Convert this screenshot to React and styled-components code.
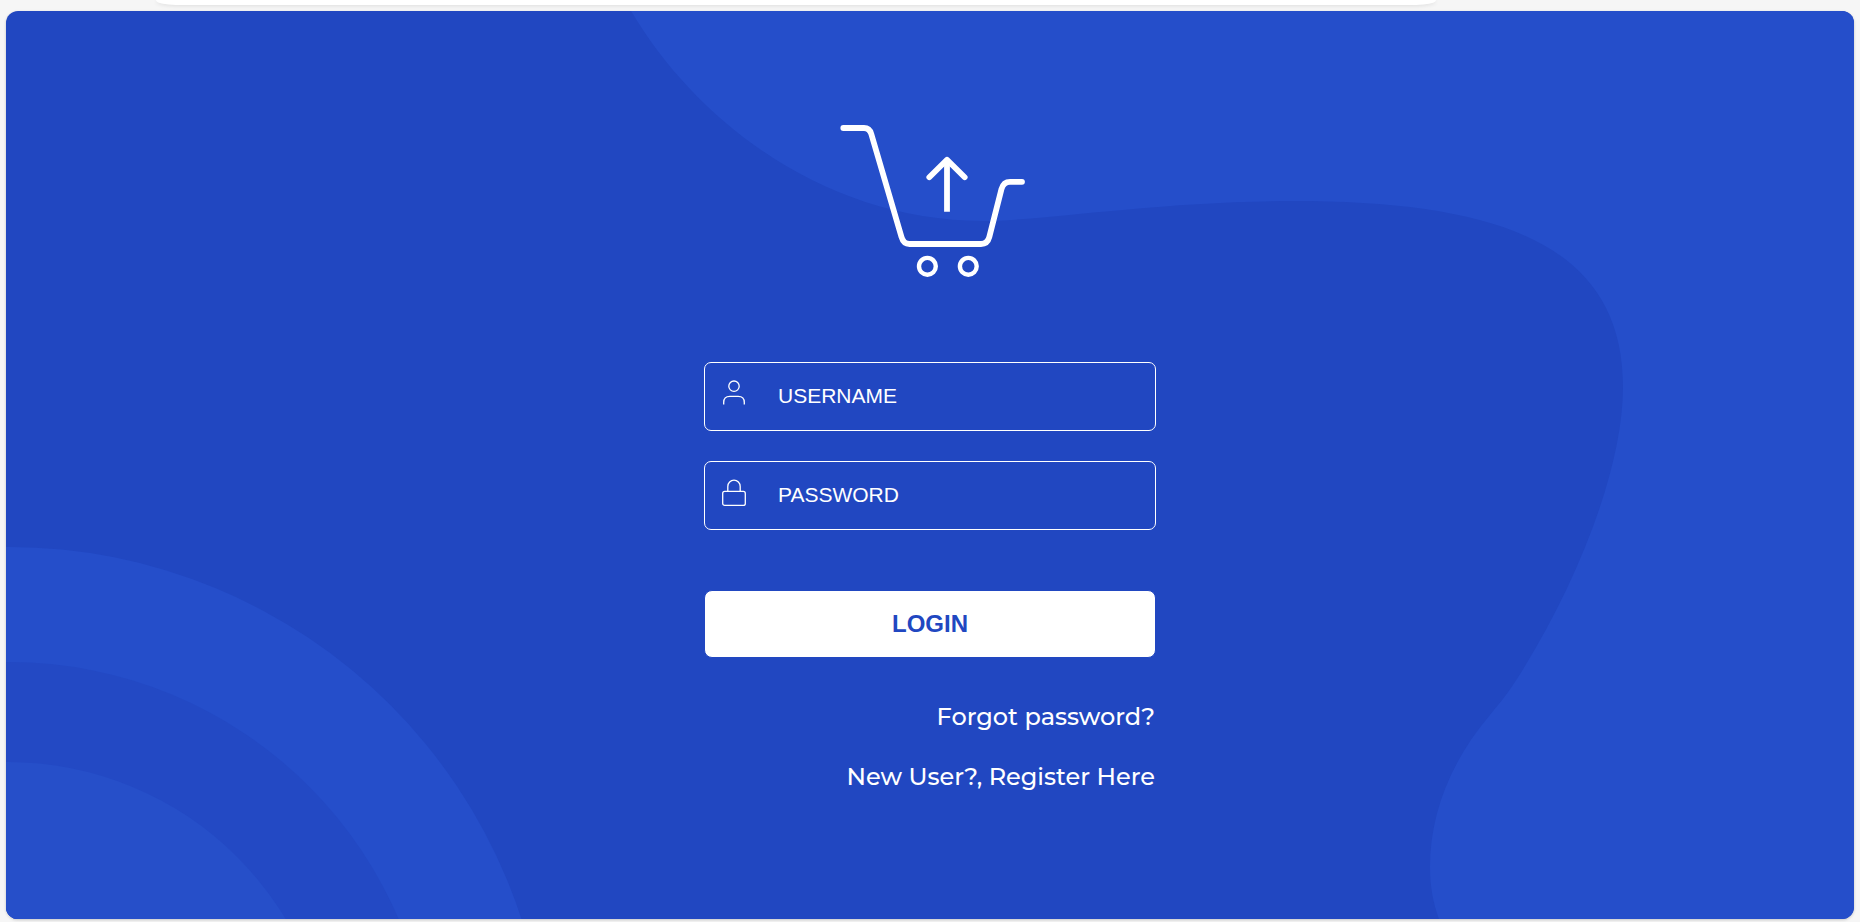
import React from "react";
import styled, { createGlobalStyle } from "styled-components";

const BLUE = "#2147c1";
const LIGHT_BLUE = "#254eca";

const GlobalStyle = createGlobalStyle`
  *, *::before, *::after { box-sizing: border-box; }
  body {
    margin: 0;
    background: #f6f6f6;
    font-family: "Liberation Sans", Arial, sans-serif;
  }
`;

const Page = styled.div`
  display: flex;
  flex-direction: column;
  min-height: 100vh;
  padding: 0 6px 3px;
`;

const TopBar = styled.header`
  width: 69.3%;
  height: 5px;
  margin: 0 0 6px 8.1%;
  background: #fff;
  border-radius: 0 0 20px 20px / 0 0 5px 5px;
  box-shadow: 0 1px 4px rgba(0, 0, 0, 0.1);
`;

const Card = styled.main`
  display: grid;
  flex: 1;
  background: ${BLUE};
  border-radius: 12px;
  box-shadow: 0 1px 3px rgba(0, 0, 0, 0.2);
  overflow: hidden;
  position: relative;
`;

const Backdrop = styled.svg`
  position: absolute;
  inset: 0;
  width: 100%;
  height: 100%;
`;

const Content = styled.div`
  position: relative;
  display: flex;
  flex-direction: column;
  align-items: center;
  padding: 113px 24px 40px;
`;

const CartLogo = styled.svg`
  display: block;
  width: 192px;
  height: 153px;
  fill: none;
  stroke: #fff;
`;

const Form = styled.form`
  display: flex;
  flex-direction: column;
  gap: 30px;
  width: 100%;
  max-width: 452px;
  margin-top: 85px;
`;

const Field = styled.label`
  display: flex;
  align-items: center;
  gap: 30px;
  height: 69px;
  padding: 0 15px 2px;
  border: 1px solid #fff;
  border-radius: 7px;
`;

const FieldIcon = styled.svg`
  flex: none;
  width: 28px;
  height: 32px;
  fill: none;
  stroke: #fff;
  stroke-width: 1.3;
`;

const Input = styled.input`
  flex: 1;
  min-width: 0;
  height: 48px;
  padding: 0;
  border: 0;
  outline: 0;
  background: transparent;
  color: #fff;
  font: 21px/24px "Liberation Sans", Arial, sans-serif;
  &::placeholder { color: #fff; opacity: 1; }
`;

const LoginButton = styled.button`
  height: 68px;
  margin-top: 30px;
  padding: 0;
  border: 1px solid ${BLUE};
  border-radius: 8px;
  background: #fff;
  color: ${BLUE};
  font: bold 24px/28px "Liberation Sans", Arial, sans-serif;
  cursor: pointer;
`;

const Links = styled.nav`
  display: flex;
  flex-direction: column;
  align-items: flex-end;
  gap: 28px;
  margin-top: 13px;
  padding-right: 1px;
`;

const TextLink = styled.a`
  color: #fff;
  font: 500 24px/32px Montserrat, Inter, sans-serif;
  text-decoration: none;
  white-space: nowrap;
`;

export default function App() {
  return (
    <>
      <GlobalStyle />
      <Page>
        <TopBar />
        <Card>
          <Backdrop viewBox="6 11 1848 908" preserveAspectRatio="none" aria-hidden="true">
            <path
              fill={LIGHT_BLUE}
              d="M631 11C700 127 830 221 983 221C1040 221 1160 201 1293 201C1500 201 1623 245 1623 387C1623 470 1575 590 1513 685C1505 697 1499 704 1490 715C1450 762 1430 815 1430 867C1430 886 1433 903 1439 919H1854V11Z"
            />
            <circle cx="9" cy="1086" r="539" fill={LIGHT_BLUE} />
            <circle cx="9" cy="1086" r="424" fill="#2349c4" />
            <circle cx="8" cy="1086" r="324" fill="#264fc9" />
          </Backdrop>
          <Content>
            <CartLogo viewBox="14 14 192 153" role="img" aria-label="Shopping cart">
              <path
                strokeWidth="5.8"
                strokeLinecap="round"
                d="M23.3 18H44Q49.500 18 51.300 24L81.500 127Q83.500 134 89.500 134H161Q167.500 134 169.300 127L181.500 79Q183.500 71.800 190 71.800H202"
              />
              <path strokeWidth="5.8" d="M127 52V101.700" />
              <path
                strokeWidth="5.8"
                strokeLinecap="round"
                strokeLinejoin="round"
                d="M109.300 67.200L127 49.800L144.700 67.200"
              />
              <circle cx="107.400" cy="156.300" r="8.400" strokeWidth="4.400" />
              <circle cx="148.300" cy="156.300" r="8.400" strokeWidth="4.400" />
            </CartLogo>
            <Form onSubmit={(e) => e.preventDefault()}>
              <Field>
                <FieldIcon viewBox="0 0 28 32" aria-hidden="true">
                  <circle cx="14" cy="6.200" r="5.200" />
                  <path d="M3.700 24.500V22.500Q3.700 16.400 9.800 16.400H18.200Q24.300 16.400 24.300 22.500V24.500" />
                </FieldIcon>
                <Input type="text" placeholder="USERNAME" aria-label="Username" />
              </Field>
              <Field>
                <FieldIcon viewBox="0 0 28 32" aria-hidden="true">
                  <rect x="2.700" y="12.400" width="22.600" height="14" rx="2" />
                  <path d="M7.800 12.400V7.400A6.200 6.200 0 0 1 20.200 7.400V12.400" />
                </FieldIcon>
                <Input type="password" placeholder="PASSWORD" aria-label="Password" />
              </Field>
              <LoginButton type="submit">LOGIN</LoginButton>
              <Links>
                <TextLink href="#forgot">Forgot password?</TextLink>
                <TextLink href="#register">New User?, Register Here</TextLink>
              </Links>
            </Form>
          </Content>
        </Card>
      </Page>
    </>
  );
}
